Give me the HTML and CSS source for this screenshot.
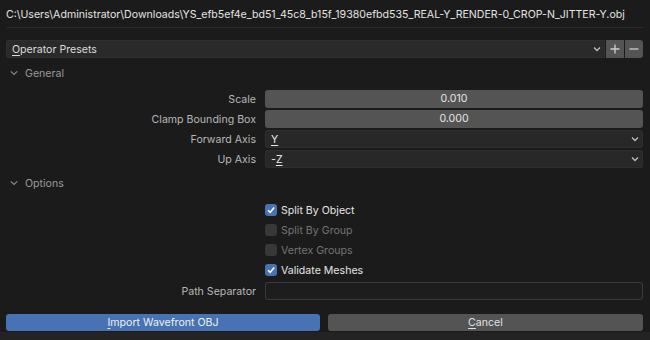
FILE: index.html
```html
<!DOCTYPE html>
<html>
<head>
<meta charset="utf-8">
<link rel="stylesheet" href="styles.css">
</head>
<body>
<div class="dialog">
  <div class="path">C:\Users\Administrator\Downloads\YS_efb5ef4e_bd51_45c8_b15f_19380efbd535_REAL-Y_RENDER-0_CROP-N_JITTER-Y.obj</div>
  <div class="sep"></div>

  <div class="presets">
    <div class="preset-menu">
      <span><u>O</u>perator Presets</span>
      <svg class="chev" width="8" height="6" viewBox="0 0 8 6"><polyline points="1,1.5 4,4.5 7,1.5" fill="none" stroke="#bdbdbd" stroke-width="1.3"/></svg>
    </div>
    <div class="pm-btns">
      <div class="pm-btn"><svg width="10" height="10" viewBox="0 0 10 10"><path d="M5 0.5V9.5M0.5 5H9.5" stroke="#cfcfcf" stroke-width="1.3"/></svg></div>
      <div class="pm-btn"><svg width="10" height="10" viewBox="0 0 10 10"><path d="M0.5 5H9.5" stroke="#cfcfcf" stroke-width="1.3"/></svg></div>
    </div>
  </div>

  <div class="section">
    <svg class="schev" width="8" height="6" viewBox="0 0 8 6"><polyline points="0.8,1.3 4,4.5 7.2,1.3" fill="none" stroke="#8a8a8a" stroke-width="1.2"/></svg>
    <span>General</span>
  </div>

  <div class="props">
    <div class="prop">
      <div class="label">Scale</div>
      <div class="num">0.010</div>
    </div>
    <div class="prop">
      <div class="label">Clamp Bounding Box</div>
      <div class="num">0.000</div>
    </div>
    <div class="prop">
      <div class="label">Forward Axis</div>
      <div class="menu"><span><u>Y</u></span>
        <svg class="chev" width="8" height="6" viewBox="0 0 8 6"><polyline points="1,1.5 4,4.5 7,1.5" fill="none" stroke="#bdbdbd" stroke-width="1.3"/></svg></div>
    </div>
    <div class="prop">
      <div class="label">Up Axis</div>
      <div class="menu"><span>-<u>Z</u></span>
        <svg class="chev" width="8" height="6" viewBox="0 0 8 6"><polyline points="1,1.5 4,4.5 7,1.5" fill="none" stroke="#bdbdbd" stroke-width="1.3"/></svg></div>
    </div>
  </div>

  <div class="section section2">
    <svg class="schev" width="8" height="6" viewBox="0 0 8 6"><polyline points="0.8,1.3 4,4.5 7.2,1.3" fill="none" stroke="#8a8a8a" stroke-width="1.2"/></svg>
    <span>Options</span>
  </div>

  <div class="checks">
    <div class="check on">
      <div class="box"><svg width="10" height="10" viewBox="0 0 10 10"><polyline points="2,5.2 4.2,7.4 8.2,2.4" fill="none" stroke="#ffffff" stroke-width="1.6"/></svg></div>
      <span>Split By Object</span>
    </div>
    <div class="check off">
      <div class="box"></div>
      <span>Split By Group</span>
    </div>
    <div class="check off">
      <div class="box"></div>
      <span>Vertex Groups</span>
    </div>
    <div class="check on">
      <div class="box"><svg width="10" height="10" viewBox="0 0 10 10"><polyline points="2,5.2 4.2,7.4 8.2,2.4" fill="none" stroke="#ffffff" stroke-width="1.6"/></svg></div>
      <span>Validate Meshes</span>
    </div>
  </div>

  <div class="prop pathsep">
    <div class="label">Path Separator</div>
    <div class="text-field"></div>
  </div>

  <div class="buttons">
    <div class="btn primary"><u>I</u>mport Wavefront OBJ</div>
    <div class="btn"><u>C</u>ancel</div>
  </div>
</div>
<div class="footer"></div>
</body>
</html>
```
FILE: styles.css
```css
html, body {
  margin: 0;
  padding: 0;
  background: #1b1b1b;
  width: 650px;
  height: 340px;
  overflow: hidden;
}
body {
  font-family: Inter, "Noto Sans", sans-serif;
  font-size: 10.6px;
  color: #dcdcdc;
}
u {
  text-decoration-thickness: 1px;
  text-underline-offset: 2px;
}
.dialog {
  padding: 0 7px 0 6px;
  height: 332px;
}
.path {
  height: 20px;
  line-height: 20px;
  padding-top: 5px;
  color: #e4e4e4;
  font-size: 10.6px;
  white-space: nowrap;
}
.sep {
  margin-top: 2px;
  height: 1px;
  background: #2a2a2a;
}
.presets {
  margin-top: 12px;
  display: flex;
  height: 18px;
  gap: 1px;
}
.preset-menu {
  flex: 1;
  display: flex;
  align-items: center;
  justify-content: space-between;
  background: #2a2a2a;
  border-radius: 3px 0 0 3px;
  padding: 0 4px 0 6px;
  color: #dadada;
  box-shadow: inset 0 0 0 1px #303030;
}
.pm-btns {
  display: flex;
  gap: 1px;
}
.pm-btn {
  width: 18px;
  height: 18px;
  background: #545454;
  display: flex;
  align-items: center;
  justify-content: center;
}
.pm-btn:last-child {
  border-radius: 0 3px 3px 0;
}
.section {
  margin-top: 6px;
  height: 18px;
  display: flex;
  align-items: center;
  gap: 7px;
  padding-left: 4px;
  color: #9a9a9a;
}
.schev {
  flex: none;
}
.props {
  margin-top: 8px;
  display: flex;
  flex-direction: column;
  gap: 2px;
}
.prop {
  display: grid;
  grid-template-columns: 250px 1fr;
  column-gap: 9px;
  height: 18px;
  align-items: center;
}
.label {
  text-align: right;
  color: #b8b8b8;
}
.num {
  height: 18px;
  line-height: 18px;
  background: #545454;
  border-radius: 3px;
  text-align: center;
  color: #e6e6e6;
}
.menu {
  height: 18px;
  background: #282828;
  border-radius: 3px;
  box-shadow: inset 0 0 0 1px #2f2f2f;
  display: flex;
  align-items: center;
  justify-content: space-between;
  padding: 0 4px 0 6px;
  color: #e8e8e8;
}
.section2 {
  margin-top: 6px;
}
.checks {
  margin-top: 11px;
  display: flex;
  flex-direction: column;
  gap: 6px;
  padding-left: 259px;
}
.check {
  height: 14px;
  display: flex;
  align-items: center;
  gap: 4px;
}
.box {
  width: 12px;
  height: 12px;
  border-radius: 3px;
  display: flex;
  align-items: center;
  justify-content: center;
}
.check.on .box {
  background: #4772b3;
}
.check.on span {
  color: #e6e6e6;
}
.check.off .box {
  background: #383838;
}
.check.off span {
  color: #747474;
}
.pathsep {
  margin-top: 5px;
}
.text-field {
  height: 18px;
  background: #1d1d1d;
  border-radius: 3px;
  box-shadow: inset 0 0 0 1px #3a3a3a;
}
.buttons {
  margin-top: 14px;
  display: grid;
  grid-template-columns: 314px 1fr;
  column-gap: 8px;
}
.btn {
  height: 17px;
  line-height: 17px;
  border-radius: 3px;
  background: #545454;
  text-align: center;
  color: #e0e0e0;
}
.btn.primary {
  background: #4772b3;
  color: #f0f0f0;
}
.footer {
  height: 8px;
  background: #232323;
}
```
